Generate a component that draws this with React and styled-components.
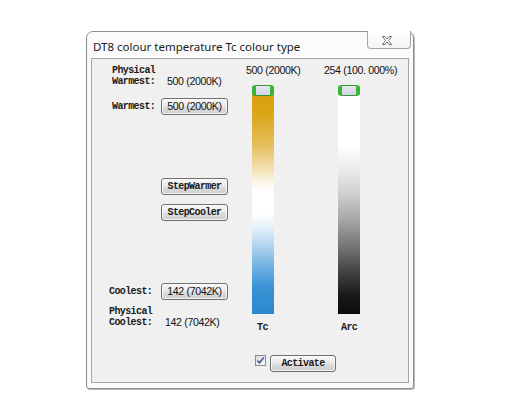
import React from "react";
import styled, { createGlobalStyle } from "styled-components";

const Global = createGlobalStyle`
  html, body { margin: 0; padding: 0; background: #ffffff; }
  body { width: 514px; height: 409px; overflow: hidden; }
`;

const Page = styled.div`
  padding: 31px 0 0 86px;
`;

const Window = styled.div`
  width: 328px;
  height: 358px;
  box-sizing: border-box;
  border: 1px solid #8e8e8e;
  border-radius: 7px 7px 3px 3px;
  background: #fbfbfb;
  box-shadow: 1px 1px 0 #b8b8b8;
  display: flex;
  flex-direction: column;
  padding: 0 4px 5px 4px;
`;

const TitleBar = styled.div`
  height: 26px;
  display: flex;
  align-items: flex-start;
  justify-content: space-between;
`;

const Title = styled.div`
  font-family: "Noto Sans", "Open Sans", sans-serif;
  font-size: 11.5px;
  color: #1a1a1a;
  padding: 7px 0 0 2px;
`;

const CloseBtn = styled.div`
  width: 44px;
  height: 18px;
  margin: -1px -2px 0 0;
  box-sizing: border-box;
  border: 1px solid #a4a4a4;
  border-top: none;
  border-radius: 0 0 4px 4px;
  background: linear-gradient(#ffffff, #f4f4f4);
  display: flex;
  align-items: center;
  justify-content: center;
  svg { margin-left: -4px; margin-top: 1px; }
`;

const Client = styled.div`
  flex: 1;
  border: 1px solid #a6a6a6;
  background: #f0f0f0;
  display: flex;
  flex-direction: column;
`;

const TopRow = styled.div`
  display: flex;
`;

const LeftCol = styled.div`
  width: 154px;
  box-sizing: border-box;
  padding: 6px 0 0 20px;
  display: flex;
  flex-direction: column;
`;

const Mono = styled.span`
  font-family: "Liberation Mono", "DejaVu Sans Mono", monospace;
  font-size: 10px;
  letter-spacing: -0.6px;
  font-weight: 600;
  color: #1a1a1a;
  line-height: 11px;
  white-space: pre;
`;

const Num = styled.span`
  font-family: "Liberation Sans", Arial, sans-serif;
  font-size: 10.6px;
  letter-spacing: -0.35px;
  color: #111;
  line-height: 11px;
  white-space: pre;
`;

const InfoBlock = styled.div`
  display: flex;
  flex-direction: column;
  margin-left: ${(p) => p.$shift || 0}px;
  margin-top: ${(p) => p.$mt || 0}px;
`;

const InfoLine = styled.div`
  display: flex;
  height: 11px;
  align-items: center;
`;

const InfoLabel = styled(Mono)`
  width: ${(p) => p.$w}px;
`;

const Row = styled.div`
  display: flex;
  align-items: center;
  margin-top: ${(p) => p.$mt}px;
  margin-left: ${(p) => p.$shift || 0}px;
`;

const RowLabel = styled(Mono)`
  width: ${(p) => p.$w}px;
`;

const Button = styled.button`
  width: ${(p) => p.$w || 67}px;
  height: 17px;
  margin: 0;
  margin-left: ${(p) => p.$ml || 0}px;
  padding: 0;
  box-sizing: border-box;
  border: 1px solid #707070;
  border-radius: 3px;
  background: linear-gradient(#f6f6f6 0%, #ebebeb 48%, #dddddd 52%, #cfcfcf 100%);
  box-shadow: inset 0 0 0 1px rgba(255, 255, 255, 0.7);
  display: flex;
  align-items: center;
  justify-content: center;
`;

const SliderCol = styled.div`
  width: ${(p) => p.$w}px;
  padding-top: 6px;
  display: flex;
  flex-direction: column;
`;

const TrackWrap = styled.div`
  position: relative;
  margin: 11px 0 0 ${(p) => p.$ml}px;
  width: 22px;
  height: 227px;
`;

const Track = styled.div`
  width: 100%;
  height: 100%;
  background: ${(p) => p.$bg};
`;

const Thumb = styled.div`
  position: absolute;
  left: 0;
  top: -2px;
  width: 22px;
  height: 11px;
  box-sizing: border-box;
  border: 1px solid #2e9a2e;
  border-left: 4px solid #3cb43c;
  border-right: 4px solid #3cb43c;
  border-radius: 3px;
  background: linear-gradient(#e8e8f4, #cfd2e6);
`;

const Caption = styled(Mono)`
  margin: 8px 0 0 ${(p) => p.$ml}px;
`;

const BottomRow = styled.div`
  display: flex;
  align-items: flex-start;
  margin: 22px 0 0 163px;
`;

const Check = styled.div`
  width: 11px;
  height: 11px;
  box-sizing: border-box;
  border: 1px solid #8c8c8c;
  background: linear-gradient(135deg, #dcdcdc, #fbfbfb);
  display: flex;
  align-items: center;
  justify-content: center;
`;

const TC_BG = `linear-gradient(to bottom,
  #d9a00c 0%, #dba518 12%, #e6c060 26%, #f3e0b0 36%, #fdf6e8 42%, #ffffff 46%,
  #ffffff 56%, #e4f0f9 62%, #b2d3ee 70%, #6aaee0 80%, #3a94d6 88%, #2a88cc 100%)`;

const ARC_BG = `linear-gradient(to bottom,
  #ffffff 0%, #ffffff 26%, #f0f0f0 34%, #d2d2d2 46%, #a8a8a8 58%, #767676 70%,
  #404040 82%, #181818 92%, #0c0c0c 100%)`;

export default function App() {
  return (
    <>
      <Global />
      <Page>
        <Window>
          <TitleBar>
            <Title>DT8 colour temperature Tc colour type</Title>
            <CloseBtn>
              <svg width="12" height="9" viewBox="0 0 12 9">
                <path
                  d="M1.5 0.5 L4 0.5 L6 3 L8 0.5 L10.5 0.5 L7.5 4.5 L10.5 8.5 L8 8.5 L6 6 L4 8.5 L1.5 8.5 L4.5 4.5 Z"
                  fill="#ffffff"
                  stroke="#6e6e6e"
                  strokeWidth="1"
                  strokeLinejoin="round"
                />
              </svg>
            </CloseBtn>
          </TitleBar>
          <Client>
            <TopRow>
              <LeftCol>
                <InfoBlock>
                  <InfoLine><Mono>Physical</Mono></InfoLine>
                  <InfoLine>
                    <InfoLabel $w={55}>Warmest:</InfoLabel>
                    <Num>500 (2000K)</Num>
                  </InfoLine>
                </InfoBlock>
                <Row $mt={11}>
                  <RowLabel $w={49}>Warmest:</RowLabel>
                  <Button><Num>500 (2000K)</Num></Button>
                </Row>
                <Row $mt={63}>
                  <Button $ml={49}><Mono>StepWarmer</Mono></Button>
                </Row>
                <Row $mt={9}>
                  <Button $ml={49}><Mono>StepCooler</Mono></Button>
                </Row>
                <Row $mt={62} $shift={-3}>
                  <RowLabel $w={52}>Coolest:</RowLabel>
                  <Button><Num>142 (7042K)</Num></Button>
                </Row>
                <InfoBlock $mt={6} $shift={-3}>
                  <InfoLine><Mono>Physical</Mono></InfoLine>
                  <InfoLine>
                    <InfoLabel $w={56}>Coolest:</InfoLabel>
                    <Num>142 (7042K)</Num>
                  </InfoLine>
                </InfoBlock>
              </LeftCol>
              <SliderCol $w={78}>
                <Num>500 (2000K)</Num>
                <TrackWrap $ml={6}>
                  <Track $bg={TC_BG} />
                  <Thumb />
                </TrackWrap>
                <Caption $ml={11}>Tc</Caption>
              </SliderCol>
              <SliderCol $w={80}>
                <Num>254 (100. 000%)</Num>
                <TrackWrap $ml={14}>
                  <Track $bg={ARC_BG} />
                  <Thumb />
                </TrackWrap>
                <Caption $ml={17}>Arc</Caption>
              </SliderCol>
            </TopRow>
            <BottomRow>
              <Check>
                <svg width="9" height="9" viewBox="0 0 9 9">
                  <path d="M1.5 4.5 L3.5 6.8 L7.8 1.5" fill="none" stroke="#4056a8" strokeWidth="1.6" />
                </svg>
              </Check>
              <Button $w={66} $ml={4}><Mono>Activate</Mono></Button>
            </BottomRow>
          </Client>
        </Window>
      </Page>
    </>
  );
}
